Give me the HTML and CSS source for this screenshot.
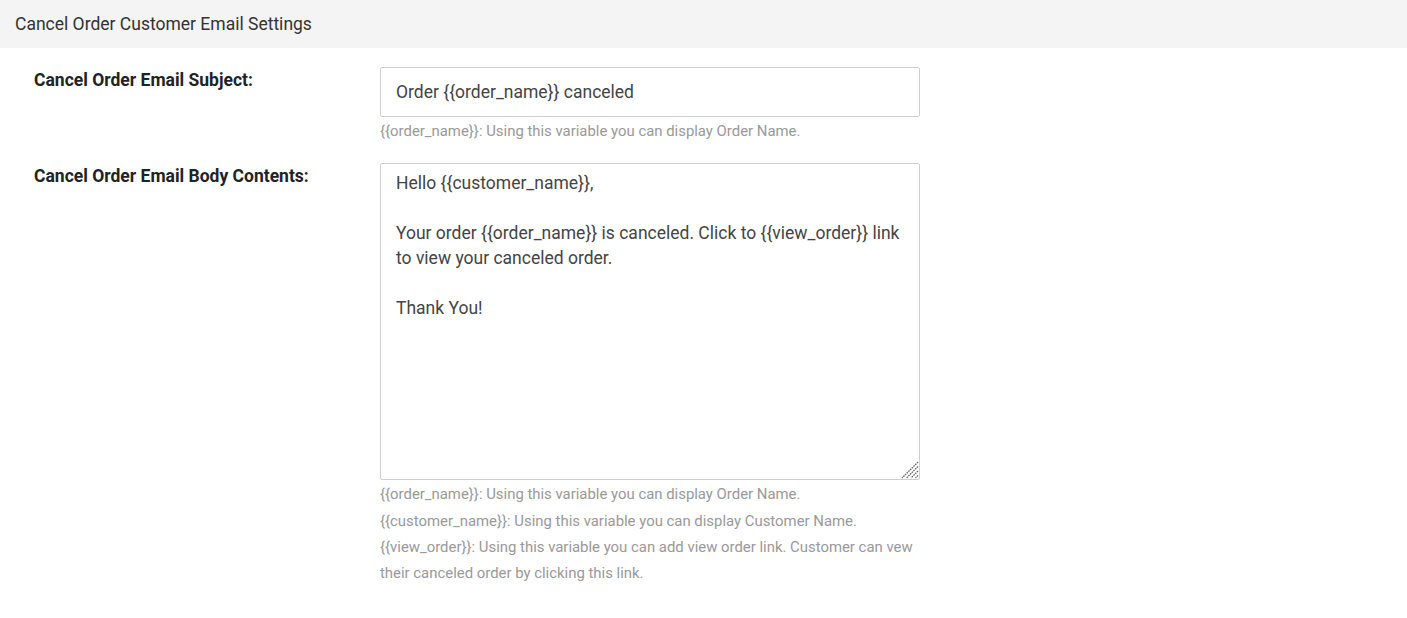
FILE: index.html
```html
<!DOCTYPE html>
<html>
<head>
<meta charset="utf-8">
<link rel="stylesheet" href="styles.css">
</head>
<body>
<div class="header">Cancel Order Customer Email Settings</div>
<div class="form">
  <div class="row">
    <label class="label">Cancel Order Email Subject:</label>
    <div class="field">
      <input class="input" type="text" value="Order {{order_name}} canceled">
      <div class="helps">
        <p class="help">{{order_name}}: Using this variable you can display Order Name.</p>
      </div>
    </div>
  </div>
  <div class="row">
    <label class="label">Cancel Order Email Body Contents:</label>
    <div class="field">
      <div class="ta-wrap">
        <textarea class="textarea">Hello {{customer_name}},

Your order {{order_name}} is canceled. Click to {{view_order}} link to view your canceled order.

Thank You!</textarea>
        <svg class="grip" width="18" height="18" viewBox="0 0 18 18" aria-hidden="true">
          <g stroke="#666" stroke-width="1.3" stroke-dasharray="1.6 0.8">
            <line x1="17" y1="1" x2="1" y2="17"/>
            <line x1="17" y1="5.5" x2="5.5" y2="17"/>
            <line x1="17" y1="10" x2="10" y2="17"/>
            <line x1="17" y1="14.5" x2="14.5" y2="17"/>
          </g>
        </svg>
      </div>
      <div class="helps">
        <p class="help">{{order_name}}: Using this variable you can display Order Name.</p>
        <p class="help">{{customer_name}}: Using this variable you can display Customer Name.</p>
        <p class="help">{{view_order}}: Using this variable you can add view order link. Customer can vew their canceled order by clicking this link.</p>
      </div>
    </div>
  </div>
</div>
</body>
</html>
```
FILE: styles.css
```css
html, body {
  margin: 0;
  padding: 0;
  background: #fff;
  font-family: Roboto, "Liberation Sans", sans-serif;
}
.header {
  background: #f4f4f4;
  height: 48px;
  line-height: 48px;
  padding-left: 15px;
  font-size: 17.5px;
  color: #333;
}
.form {
  padding: 19px 0 0 34px;
}
.row {
  display: flex;
  margin-bottom: 19px;
}
.label {
  width: 346px;
  flex: none;
  font-weight: bold;
  font-size: 17.5px;
  color: #1d2327;
  line-height: 24px;
  padding-top: 1px;
}
.field {
  width: 540px;
}
.input, .textarea {
  display: block;
  box-sizing: border-box;
  width: 540px;
  border: 1px solid #cfcfcf;
  border-radius: 2px;
  font-family: Roboto, "Liberation Sans", sans-serif;
  font-size: 17.5px;
  color: #444;
  padding: 0 15px;
  margin: 0;
  outline: none;
}
.input {
  height: 50px;
}
.ta-wrap {
  position: relative;
}
.textarea {
  height: 317px;
  padding-top: 7px;
  line-height: 25px;
  resize: none;
}
.grip {
  position: absolute;
  right: 1px;
  bottom: 1px;
  pointer-events: none;
}
.helps {
  padding-top: 1px;
}
.help {
  margin: 0;
  font-size: 14.9px;
  line-height: 26.3px;
  color: #999;
}
```
